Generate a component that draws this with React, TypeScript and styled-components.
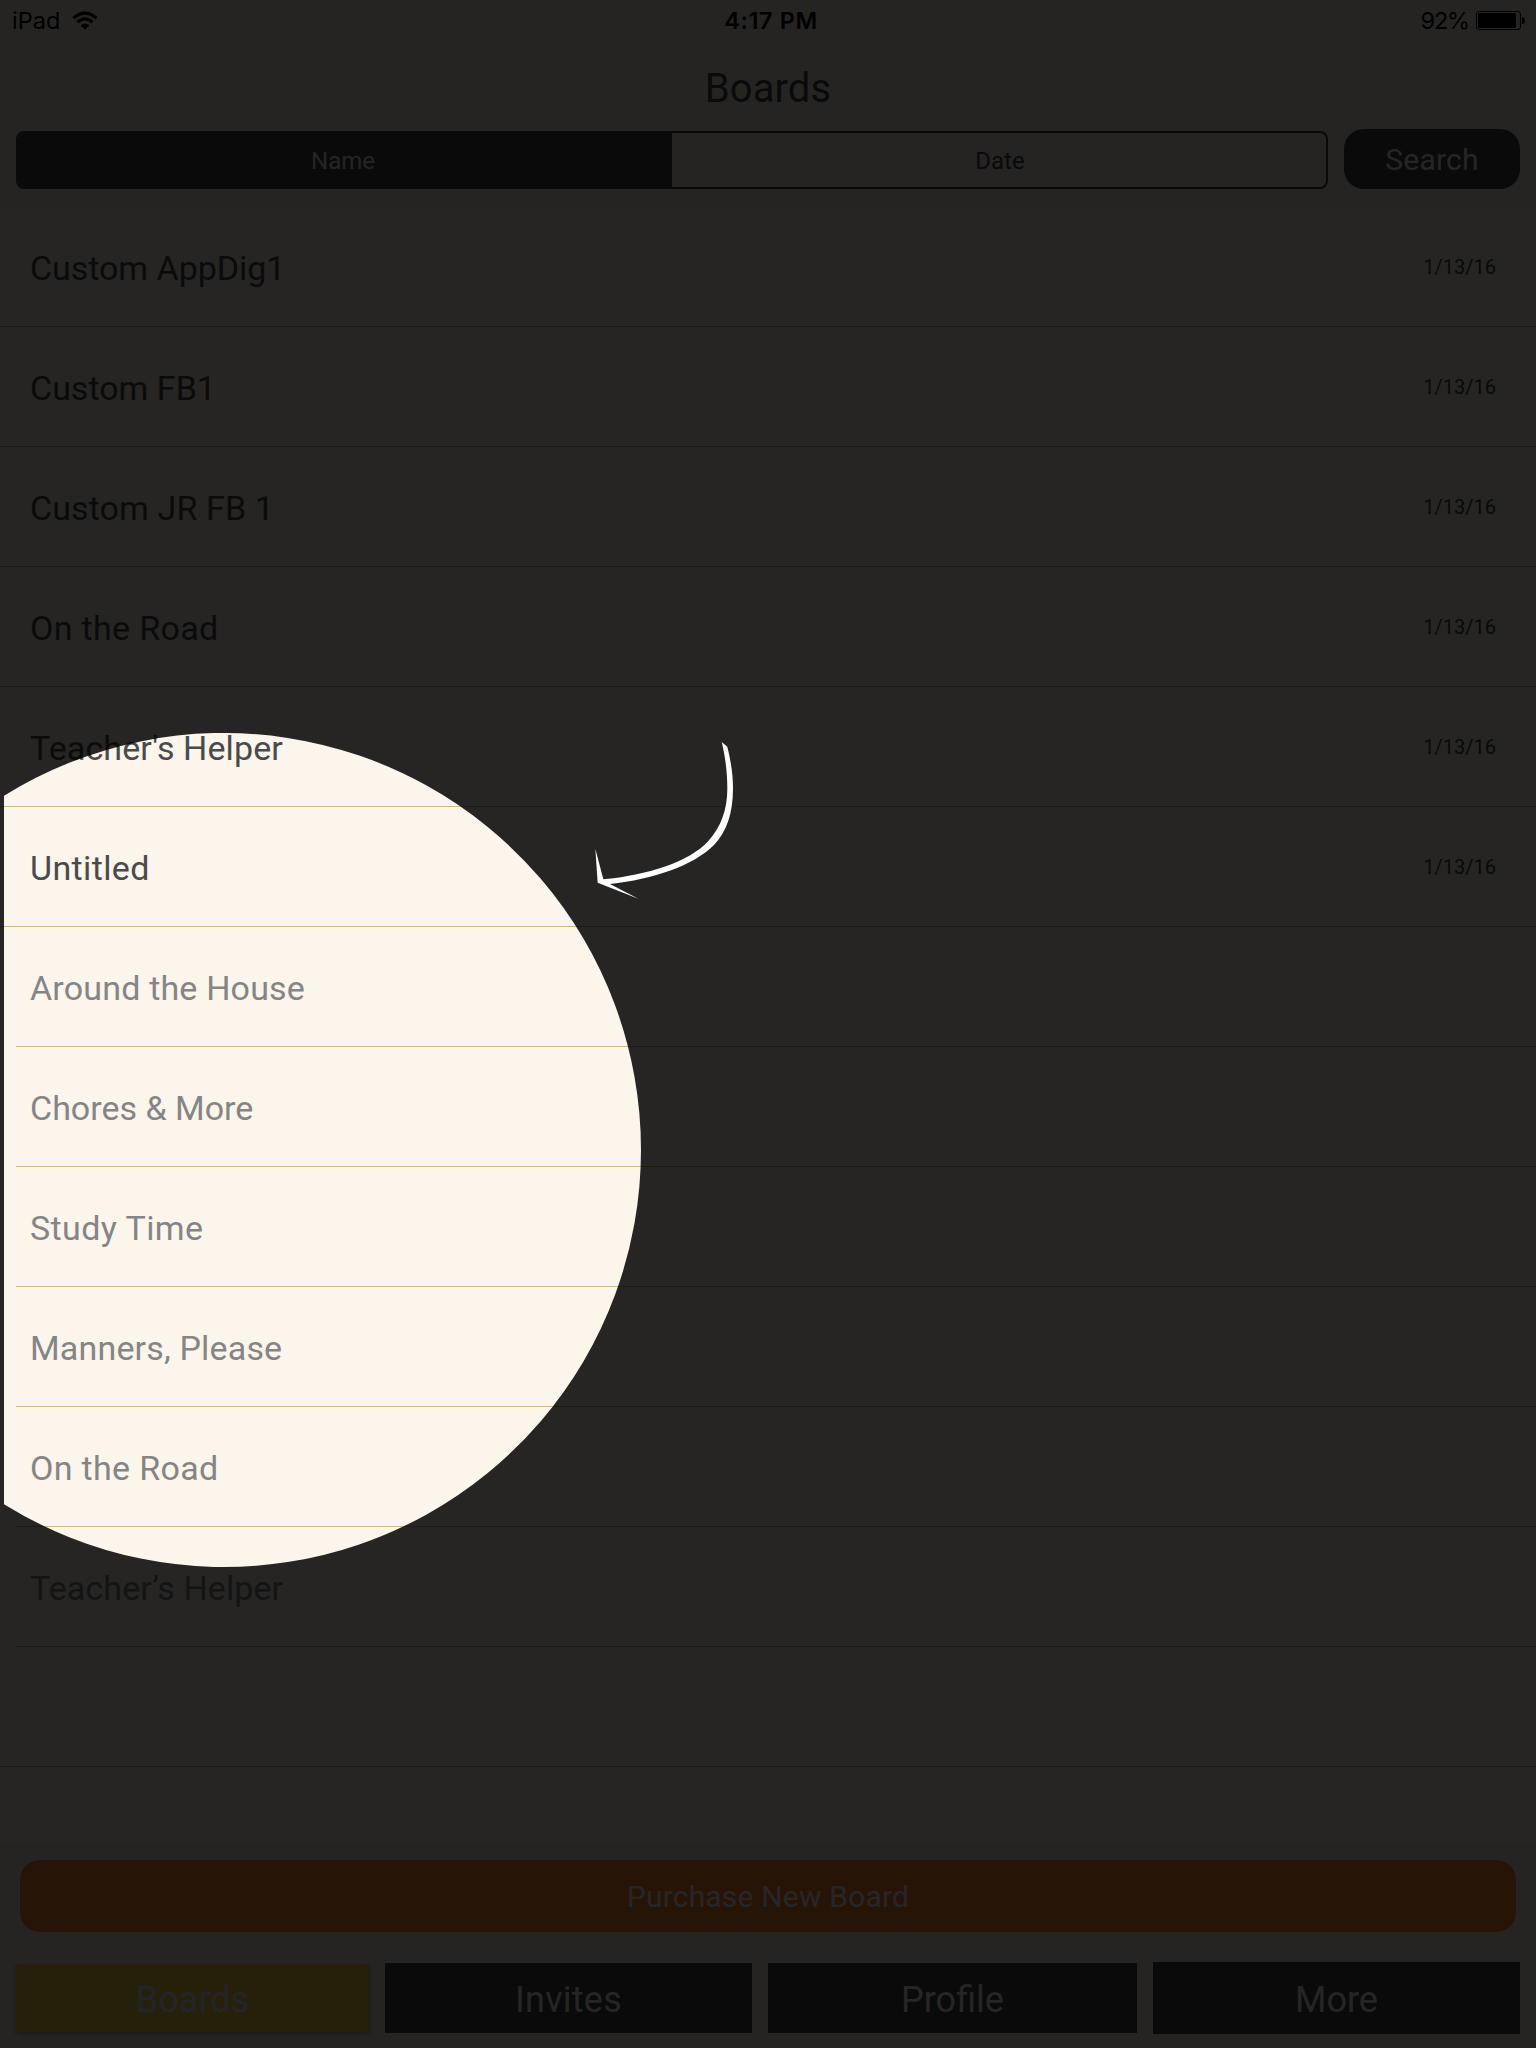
import React from "react";
import styled, { createGlobalStyle } from "styled-components";

const GlobalStyle = createGlobalStyle`
  * { box-sizing: border-box; }
  body { margin: 0; background: #f9efe6; }
`;

const Screen = styled.div`
  position: relative;
  width: 1536px;
  height: 2048px;
  display: flex;
  flex-direction: column;
  overflow: hidden;
  background: #f9efe6;
  color: #474747;
  font-family: Roboto, "Liberation Sans", sans-serif;
`;

const StatusBar = styled.div`
  height: 41px;
  padding: 0 11px 0 12px;
  display: grid;
  grid-template-columns: 1fr auto 1fr;
  align-items: center;
  color: #000;
  font: 400 24px/41px Inter, sans-serif;
`;

const StatusGroup = styled.div<{ $end?: boolean; $gap: number }>`
  display: flex;
  align-items: center;
  justify-content: ${(p) => (p.$end ? "flex-end" : "flex-start")};
  gap: ${(p) => p.$gap}px;
`;

const StatusText = styled.span<{ $spacing: number }>`
  font-size: 23.5px;
  letter-spacing: ${(p) => p.$spacing}px;
`;

const Clock = styled.span`
  font-size: 23.5px;
  font-weight: 600;
  letter-spacing: 0.6px;
  padding-left: 5px;
`;

const Title = styled.h1`
  margin: 0;
  height: 88px;
  padding-top: 4px;
  font-size: 40px;
  font-weight: 400;
  line-height: 88px;
  letter-spacing: 0.1px;
  text-align: center;
`;

const Toolbar = styled.div`
  height: 78px;
  padding: 0 16px 18px;
  display: flex;
  align-items: flex-end;
  gap: 16px;
`;

const Segments = styled.div`
  flex: 1;
  height: 58px;
  display: grid;
  grid-template-columns: 654px 654px;
  border: 2px solid #434343;
  border-radius: 8px;
  overflow: hidden;
`;

const Segment = styled.button<{ $active?: boolean }>`
  border: 0;
  padding: ${(p) => (p.$active ? "2px 4px 0 0" : "2px 0 0 2px")};
  background: ${(p) => (p.$active ? "#434343" : "transparent")};
  color: ${(p) => (p.$active ? "#f9eee5" : "#434343")};
  font: 400 24px/52px Roboto, sans-serif;
`;

const SearchButton = styled.button`
  width: 176px;
  height: 60px;
  border: 0;
  padding: 2px 0 0;
  border-radius: 20px;
  background: #434343;
  color: #f4f4f4;
  font: 400 30px/58px Roboto, sans-serif;
  letter-spacing: 0.2px;
`;

const List = styled.div`
  flex: none;
  height: 1637px;
  background: #fcf5eb;
  overflow: hidden;
`;

const Row = styled.div<{ $inset?: boolean }>`
  height: 120px;
  margin-left: ${(p) => (p.$inset ? 16 : 0)}px;
  padding: 3px 40px 0 ${(p) => (p.$inset ? 14 : 30)}px;
  display: flex;
  align-items: center;
  justify-content: space-between;
  border-bottom: 1px solid #d6b57c;
`;

const RowName = styled.span<{ $muted?: boolean; $spacing: number }>`
  color: ${(p) => (p.$muted ? "#858585" : "#4a4a4a")};
  font-size: 34px;
  letter-spacing: ${(p) => p.$spacing}px;
`;

const RowDate = styled.span`
  padding-bottom: 2px;
  font-size: 20px;
`;

const PurchaseButton = styled.button`
  height: 72px;
  margin: 16px 20px 30px;
  border: 0;
  padding: 1px 0 0;
  border-radius: 20px;
  background: #fa8432;
  color: #fcfcfc;
  font: 400 30px/70px Roboto, sans-serif;
  letter-spacing: 0.18px;
`;

const TabBar = styled.nav`
  height: 72px;
  padding: 0 16px;
  display: grid;
  grid-template-columns: 353px 367px 369px 367px;
  gap: 16px;
  align-items: center;
`;

const Tab = styled.button<{ $active?: boolean; $height: number; $spacing: number }>`
  height: ${(p) => p.$height}px;
  border: 0;
  padding: 4px 0 0;
  background: ${(p) => (p.$active ? "#fbd543" : "#434343")};
  color: ${(p) => (p.$active ? "#eef2fb" : "#f4f4f4")};
  box-shadow: ${(p) => (p.$active ? "0 2px 4px rgba(0, 0, 0, 0.35)" : "none")};
  font: 400 36px/64px Roboto, sans-serif;
  letter-spacing: ${(p) => p.$spacing}px;
`;

const CoachOverlay = styled.svg`
  position: absolute;
  inset: 0;
`;

const boards = [
  { name: "Custom AppDig1", spacing: -0.05 },
  { name: "Custom FB1", spacing: 0 },
  { name: "Custom JR FB 1", spacing: 0.1 },
  { name: "On the Road", spacing: 0.32 },
  { name: "Teacher's Helper", spacing: 0.1 },
  { name: "Untitled", spacing: 0.36 },
];

const templates = [
  { name: "Around the House", spacing: 0.18 },
  { name: "Chores & More", spacing: 0 },
  { name: "Study Time", spacing: 0.4 },
  { name: "Manners, Please", spacing: 0.17 },
  { name: "On the Road", spacing: 0.32 },
  { name: "Teacher\u2019s Helper", spacing: 0.1 },
];

const tabs = [
  { label: "Boards", height: 68, spacing: 0, active: true },
  { label: "Invites", height: 70, spacing: 0.25 },
  { label: "Profile", height: 70, spacing: 0 },
  { label: "More", height: 72, spacing: 0 },
];

const WifiIcon = () => (
  <svg width="26" height="20" viewBox="0 0 26 20">
    <g fill="none" stroke="#000" strokeWidth="3.1">
      <path d="M1.6 7.1Q13 -2.9 24.4 7.1" />
      <path d="M5.5 11.2Q13 4.6 20.5 11.2" />
    </g>
    <path d="M8.6 14.4Q13 10.8 17.4 14.4L13 18.8Z" />
  </svg>
);

const BatteryIcon = () => (
  <svg width="49" height="19" viewBox="0 0 49 19">
    <rect x="0.5" y="0.5" width="44" height="18" rx="2.6" fill="none" stroke="#000" />
    <rect x="2" y="2" width="38" height="15" rx="1" />
    <path d="M46 6Q49 6.400 49 9.500Q49 12.600 46 13Z" />
  </svg>
);

export default function App() {
  return (
    <>
      <GlobalStyle />
      <Screen>
        <StatusBar>
          <StatusGroup $gap={12}>
            <StatusText $spacing={0}>iPad</StatusText>
            <WifiIcon />
          </StatusGroup>
          <Clock>4:17 PM</Clock>
          <StatusGroup $end $gap={7}>
            <StatusText $spacing={-1.2}>92%</StatusText>
            <BatteryIcon />
          </StatusGroup>
        </StatusBar>
        <Title>Boards</Title>
        <Toolbar>
          <Segments>
            <Segment $active>Name</Segment>
            <Segment>Date</Segment>
          </Segments>
          <SearchButton>Search</SearchButton>
        </Toolbar>
        <List>
          {boards.map((board) => (
            <Row key={board.name}>
              <RowName $spacing={board.spacing}>{board.name}</RowName>
              <RowDate>1/13/16</RowDate>
            </Row>
          ))}
          {templates.map((board) => (
            <Row key={board.name} $inset>
              <RowName $muted $spacing={board.spacing}>
                {board.name}
              </RowName>
            </Row>
          ))}
          <Row />
        </List>
        <PurchaseButton>Purchase New Board</PurchaseButton>
        <TabBar>
          {tabs.map((tab) => (
            <Tab
              key={tab.label}
              $active={tab.active}
              $height={tab.height}
              $spacing={tab.spacing}
            >
              {tab.label}
            </Tab>
          ))}
        </TabBar>
        <CoachOverlay width="1536" height="2048" viewBox="0 0 1536 2048">
          <path
            fill="#000"
            fillOpacity="0.851"
            fillRule="evenodd"
            d="M0 0H1536V2048H0ZM4 795.750A417 417 0 1 1 4 1504.250Z"
          />
          <g transform="translate(560 710) scale(0.33333)" fill="#fff">
            <path d="M485 96L502 110C513 154 519 195 519 235C519 310 500 365 462 405C400 467 280 508 150 522L235 566L113 518L106 416L130 508C260 496 390 455 445 393C483 350 502 300 502 235C502 185 495 135 485 96Z" />
          </g>
        </CoachOverlay>
      </Screen>
    </>
  );
}
